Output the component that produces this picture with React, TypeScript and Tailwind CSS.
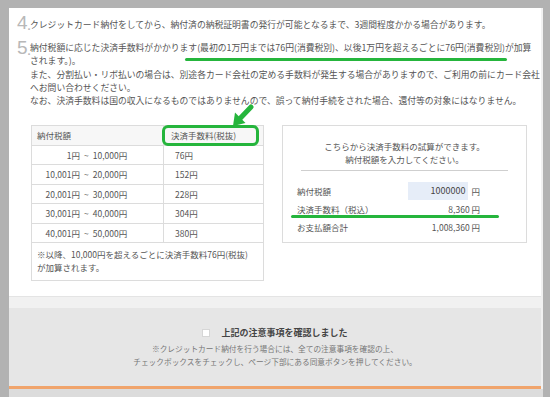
const jp = "font-['Noto_Sans_CJK_JP','Noto_Sans',sans-serif]";

const feeRows = [
  { from: "1円", to: "10,000円", fee: "76円" },
  { from: "10,001円", to: "20,000円", fee: "152円" },
  { from: "20,001円", to: "30,000円", fee: "228円" },
  { from: "30,001円", to: "40,000円", fee: "304円" },
  { from: "40,001円", to: "50,000円", fee: "380円" },
];

function Num({ n }: { n: string }) {
  return (
    <span className="w-[13px] shrink-0 flex items-end whitespace-nowrap text-[#b8b8b8] font-['Liberation_Sans',sans-serif]">
      <span className="text-[19px] leading-[19px]">{n}</span>
      <span className="text-[11px] leading-[11px] font-bold">.</span>
    </span>
  );
}

function FeeTable() {
  return (
    <div className="relative w-[233px] border border-[#dcdcdc] text-[8.5px] text-[#555]">
      <div className="flex h-[19.5px] bg-[#f7f7f7] border-b border-[#dcdcdc]">
        <div className="w-[132px] border-r border-[#dcdcdc] pl-[5px] flex items-center">納付税額</div>
        <div className="flex-1 pl-[7px] flex items-center">決済手数料(税抜)</div>
      </div>
      {feeRows.map((r) => (
        <div key={r.fee} className="flex h-[19.5px] border-b border-[#dcdcdc]">
          <div className="w-[132px] border-r border-[#dcdcdc] flex items-center">
            <span className="w-[48px] text-right">{r.from}</span>
            <span className="px-[4px]">~</span>
            <span>{r.to}</span>
          </div>
          <div className="flex-1 pl-[11px] flex items-center">{r.fee}</div>
        </div>
      ))}
      <div className="px-[5px] pt-[5px] pb-[6px] leading-[13px]">
        ※以降、10,000円を超えるごとに決済手数料76円(税抜)
        <br />
        が加算されます。
      </div>
      {/* green ring on header */}
      <div className="absolute left-[130px] top-[-1px] w-[97px] h-[21px] border-[3px] border-[#25b53c] rounded-[6px]" />
    </div>
  );
}

function Calculator() {
  return (
    <div className="relative w-[245px] h-[118px] border border-[#dcdcdc] text-[8.5px] text-[#555]">
      <div className="pt-[14px] text-center leading-[13px]">
        こちらから決済手数料の試算ができます。
        <br />
        納付税額を入力してください。
      </div>
      <div className="mx-[18px] mt-[4px] border-t border-[#cfcfcf]" />
      <div className="pl-[14px] pr-[46px] mt-[10px]">
        <div className="flex justify-between items-center h-[19px]">
          <span>納付税額</span>
          <span className="flex items-center">
            <span className="w-[60px] h-[18px] bg-[#e6edf8] text-right pr-[3px] leading-[18px] text-[9px] text-[#444]">1000000</span>
            <span className="ml-[3px]">円</span>
          </span>
        </div>
        <div className="flex justify-between items-center h-[18px]">
          <span>決済手数料（税込）</span>
          <span>8,360 円</span>
        </div>
        <div className="flex justify-between items-center h-[17px]">
          <span>お支払額合計</span>
          <span>1,008,360 円</span>
        </div>
      </div>
      <div className="absolute left-[8px] top-[89px] w-[208px] h-[3px] rounded-full bg-[#25b53c]" />
    </div>
  );
}

export default function App() {
  return (
    <div className={`w-[550px] h-[397px] overflow-hidden bg-[#b2b2b2] pt-[8px] pl-[9px] pr-[7px] ${jp}`}>
      <div className="h-full bg-[#f1f1f1] flex flex-col">
        <div className="relative h-[289px] mr-[2px] bg-white border-b border-[#e4e4e4] pl-[8px] pt-[5px]">
          {/* item 4 */}
          <div className="flex items-end">
            <Num n="4" />
            <p className="text-[8.8px] leading-[13px] text-[#555] whitespace-nowrap pb-[1px]">
              クレジットカード納付をしてから、納付済の納税証明書の発行が可能となるまで、3週間程度かかる場合があります。
            </p>
          </div>

          {/* item 5 */}
          <div className="flex items-start mt-[6px]">
            <Num n="5" />
            <p className="text-[8.8px] leading-[13.3px] text-[#555] whitespace-nowrap pt-[3px]">
              納付税額に応じた決済手数料がかかります(最初の1万円までは76円(消費税別)、以後1万円を超えるごとに76円(消費税別)が加算
              <br />
              されます。)。
              <br />
              また、分割払い・リボ払いの場合は、別途各カード会社の定める手数料が発生する場合がありますので、ご利用の前にカード会社
              <br />
              へお問い合わせください。
              <br />
              なお、決済手数料は国の収入になるものではありませんので、誤って納付手続をされた場合、還付等の対象にはなりません。
            </p>
          </div>
          <div className="absolute left-[176px] top-[50px] w-[322px] h-[3px] rounded-full bg-[#25b53c]" />

          {/* arrow annotation */}
          <svg className="absolute left-[213px] top-[96px]" width="34" height="26" viewBox="0 0 34 26">
            <line x1="29" y1="3" x2="18" y2="14.5" stroke="#25b53c" strokeWidth="5" strokeLinecap="round" />
            <polygon points="11,22 23.5,19 13,8.5" fill="#25b53c" />
          </svg>

          <div className="flex gap-[18px] pl-[14px] mt-[18px]">
            <FeeTable />
            <Calculator />
          </div>
        </div>

        <div className="mt-[11px] h-[81px] mr-[2px] bg-[#e6e6e6] border-b-[3px] border-[#f0a46c] flex flex-col items-center pt-[19px]">
          <div className="flex items-center h-[12px]">
            <span className="w-[8px] h-[8px] bg-white border border-[#d6d6d6] mr-[11px]" />
            <span className="text-[9px] font-bold text-[#444]">上記の注意事項を確認しました</span>
          </div>
          <p className="mt-[4px] text-[7.7px] leading-[12.7px] text-[#777] text-center">
            ※クレジットカード納付を行う場合には、全ての注意事項を確認の上、
            <br />
            チェックボックスをチェックし、ページ下部にある同意ボタンを押してください。
          </p>
        </div>
        <div className="flex-1 bg-[#dcdcdc]" />
      </div>
    </div>
  );
}
